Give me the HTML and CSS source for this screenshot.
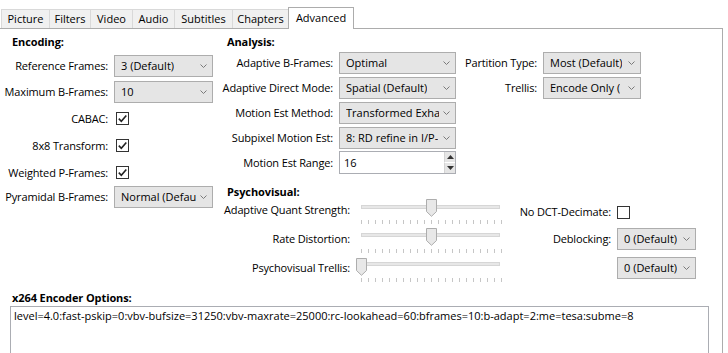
FILE: index.html
```html
<!DOCTYPE html>
<html>
<head>
<meta charset="utf-8">
<link rel="stylesheet" href="styles.css">
</head>
<body>
<div class="tabs">
  <div class="tab t-picture">Picture</div>
  <div class="tab t-filters">Filters</div>
  <div class="tab t-video">Video</div>
  <div class="tab t-audio">Audio</div>
  <div class="tab t-subs">Subtitles</div>
  <div class="tab t-chapters">Chapters</div>
  <div class="tab t-adv active">Advanced</div>
</div>
<div class="panel">
  <div class="top">
    <section class="enc">
      <h3 class="hdr">Encoding:</h3>
      <div class="enc-grid">
        <label class="lbl">Reference Frames:</label>
        <div class="combo"><span>3 (Default)</span><svg class="chev" width="7" height="4" viewBox="0 0 7 4"><path d="M0.5 0.5L3.5 3.5L6.5 0.5"/></svg></div>
        <label class="lbl">Maximum B-Frames:</label>
        <div class="combo"><span>10</span><svg class="chev" width="7" height="4" viewBox="0 0 7 4"><path d="M0.5 0.5L3.5 3.5L6.5 0.5"/></svg></div>
        <label class="lbl">CABAC:</label>
        <div class="cb"><svg width="11" height="11" viewBox="0 0 11 11"><path d="M1.8 5.6L4.3 8.2L9.3 2.4"/></svg></div>
        <label class="lbl">8x8 Transform:</label>
        <div class="cb"><svg width="11" height="11" viewBox="0 0 11 11"><path d="M1.8 5.6L4.3 8.2L9.3 2.4"/></svg></div>
        <label class="lbl">Weighted P-Frames:</label>
        <div class="cb"><svg width="11" height="11" viewBox="0 0 11 11"><path d="M1.8 5.6L4.3 8.2L9.3 2.4"/></svg></div>
        <label class="lbl">Pyramidal B-Frames:</label>
        <div class="combo"><span>Normal (Defau</span><svg class="chev" width="7" height="4" viewBox="0 0 7 4"><path d="M0.5 0.5L3.5 3.5L6.5 0.5"/></svg></div>
      </div>
    </section>
    <section class="right">
      <h3 class="hdr">Analysis:</h3>
      <div class="an-grid">
        <label class="lbl c1">Adaptive B-Frames:</label>
        <div class="combo"><span>Optimal</span><svg class="chev" width="7" height="4" viewBox="0 0 7 4"><path d="M0.5 0.5L3.5 3.5L6.5 0.5"/></svg></div>
        <label class="lbl">Partition Type:</label>
        <div class="combo"><span>Most (Default)</span><svg class="chev" width="7" height="4" viewBox="0 0 7 4"><path d="M0.5 0.5L3.5 3.5L6.5 0.5"/></svg></div>

        <label class="lbl c1">Adaptive Direct Mode:</label>
        <div class="combo"><span>Spatial (Default)</span><svg class="chev" width="7" height="4" viewBox="0 0 7 4"><path d="M0.5 0.5L3.5 3.5L6.5 0.5"/></svg></div>
        <label class="lbl">Trellis:</label>
        <div class="combo"><span>Encode Only (</span><svg class="chev" width="7" height="4" viewBox="0 0 7 4"><path d="M0.5 0.5L3.5 3.5L6.5 0.5"/></svg></div>

        <label class="lbl c1">Motion Est Method:</label>
        <div class="combo"><span>Transformed Exha</span><svg class="chev" width="7" height="4" viewBox="0 0 7 4"><path d="M0.5 0.5L3.5 3.5L6.5 0.5"/></svg></div>

        <label class="lbl c1">Subpixel Motion Est:</label>
        <div class="combo"><span>8: RD refine in I/P-</span><svg class="chev" width="7" height="4" viewBox="0 0 7 4"><path d="M0.5 0.5L3.5 3.5L6.5 0.5"/></svg></div>

        <label class="lbl c1">Motion Est Range:</label>
        <div class="spin">
          <span class="spin-val">16</span>
          <div class="spin-btns">
            <div class="sb"><svg width="7" height="4" viewBox="0 0 7 4"><path d="M0 4L3.5 0L7 4Z"/></svg></div>
            <div class="sb"><svg width="7" height="4" viewBox="0 0 7 4"><path d="M0 0L3.5 4L7 0Z"/></svg></div>
          </div>
        </div>
      </div>

      <h3 class="hdr hdr-psy">Psychovisual:</h3>
      <div class="psy-grid">
        <label class="lbl">Adaptive Quant Strength:</label>
        <div class="slider"><div class="track"></div><div class="ticks"></div><svg class="thumb" style="left:70px" width="11" height="18" viewBox="0 0 11 18"><path d="M0.5 0.5H10.5V12.5L5.5 17.3L0.5 12.5Z"/></svg></div>
        <label class="lbl shift">No DCT-Decimate:</label>
        <div class="cb cb-plain shift"></div>

        <label class="lbl">Rate Distortion:</label>
        <div class="slider s2"><div class="track"></div><div class="ticks"></div><svg class="thumb" style="left:70px" width="11" height="18" viewBox="0 0 11 18"><path d="M0.5 0.5H10.5V12.5L5.5 17.3L0.5 12.5Z"/></svg></div>
        <label class="lbl">Deblocking:</label>
        <div class="combo"><span>0 (Default)</span><svg class="chev" width="7" height="4" viewBox="0 0 7 4"><path d="M0.5 0.5L3.5 3.5L6.5 0.5"/></svg></div>

        <label class="lbl">Psychovisual Trellis:</label>
        <div class="slider s3"><div class="track"></div><div class="ticks"></div><svg class="thumb" style="left:0px" width="11" height="18" viewBox="0 0 11 18"><path d="M0.5 0.5H10.5V12.5L5.5 17.3L0.5 12.5Z"/></svg></div>
        <div class="combo c4"><span>0 (Default)</span><svg class="chev" width="7" height="4" viewBox="0 0 7 4"><path d="M0.5 0.5L3.5 3.5L6.5 0.5"/></svg></div>
      </div>
    </section>
  </div>
  <div class="opts">
    <h3 class="hdr">x264 Encoder Options:</h3>
    <div class="textarea">level=4.0:fast-pskip=0:vbv-bufsize=31250:vbv-maxrate=25000:rc-lookahead=60:bframes=10:b-adapt=2:me=tesa:subme=8</div>
  </div>
</div>
</body>
</html>
```
FILE: styles.css
```css
* { box-sizing: border-box; }
html, body { margin: 0; padding: 0; }
body {
  width: 728px;
  height: 353px;
  overflow: hidden;
  background: #fff;
  color: #000;
  font-family: "Open Sans", "Noto Sans", sans-serif;
  font-size: 11px;
  line-height: 16px;
}

/* Tabs */
.tabs {
  display: flex;
  align-items: flex-end;
  height: 28px;
  padding-left: 1px;
  position: relative;
  z-index: 1;
}
.tab {
  height: 19px;
  border: 1px solid #d9d9d9;
  border-bottom: none;
  background: #f0f0f0;
  margin-right: -1px;
  text-align: center;
  line-height: 17px;
  white-space: nowrap;
}
.t-picture { width: 49px; }
.t-filters { width: 42px; }
.t-video { width: 43px; }
.t-audio { width: 43px; }
.t-subs { width: 59px; }
.t-chapters { width: 57px; }
.t-adv { width: 66px; }
.tab.active {
  height: 22px;
  margin-bottom: -1px;
  background: #fff;
  border-color: #acacac;
  line-height: 19px;
  position: relative;
}

/* Panel */
.panel {
  border-top: 1px solid #acacac;
  border-right: 1px solid #acacac;
  margin-right: 5px;
  height: 340px;
}
.top {
  display: flex;
  padding-top: 5px;
}
.hdr {
  margin: 0;
  font-size: 11px;
  font-weight: 700;
  line-height: 16px;
  letter-spacing: -0.1px;
}
.enc { width: 213px; flex: none; }
.enc .hdr { padding-left: 12px; }
.right { flex: none; }
.right .hdr { padding-left: 14px; }

.lbl {
  justify-self: end;
  white-space: nowrap;
  letter-spacing: -0.15px;
}

.enc-grid {
  display: grid;
  grid-template-columns: 108px 99px;
  grid-template-rows: 26px 26px 27px 27px 27px 22px;
  column-gap: 6px;
  margin-top: 3px;
  align-items: center;
}

.an-grid {
  display: grid;
  grid-template-columns: 120px 117px 75px 98px;
  grid-auto-rows: 25px;
  column-gap: 6px;
  align-items: center;
}
.c1 { grid-column: 1; }
.c4 { grid-column: 4; }

.hdr-psy {
  margin-top: 9px;
  margin-bottom: -4px;
}
.psy-grid {
  display: grid;
  grid-template-columns: 137px 145px 104px 79px;
  grid-template-rows: 28px 29px 29px;
  column-gap: 6px;
  align-items: center;
}
.shift { margin-top: 4px; }

/* Combobox */
.combo {
  height: 22px;
  width: 100%;
  border: 1px solid #adadad;
  background: #e5e5e5;
  display: flex;
  align-items: center;
  justify-content: space-between;
  padding: 0 5px 0 6px;
  white-space: nowrap;
  overflow: hidden;
}
.combo span { overflow: hidden; }
.chev { flex: none; margin-left: 4px; }
.chev path { fill: none; stroke: #7a7a7a; stroke-width: 1; }

/* Checkbox */
.cb {
  width: 13px;
  height: 13px;
  border: 1px solid #333;
  background: #fff;
  justify-self: start;
  margin-left: 2px;
  display: flex;
  align-items: center;
  justify-content: center;
}
.cb svg path { fill: none; stroke: #222; stroke-width: 1.6; }
.cb-plain { margin-left: 0; }

/* Spinbox */
.spin {
  height: 23px;
  width: 100%;
  border: 1px solid #abadb3;
  background: #fff;
  display: flex;
  align-items: center;
  justify-content: space-between;
  padding-left: 4px;
}
.spin-btns {
  display: flex;
  flex-direction: column;
  width: 11px;
  height: 100%;
}
.sb {
  flex: 1;
  background: #e5e5e5;
  border-left: 1px solid #d4d4d4;
  display: flex;
  align-items: center;
  justify-content: center;
}
.sb + .sb { border-top: 1px solid #fff; }
.sb svg path { fill: #333; }

/* Slider */
.slider {
  position: relative;
  height: 28px;
  align-self: start;
}
.track {
  margin: 9px 1px 0 5px;
  height: 4px;
  background: #e7e7e7;
  border: 1px solid #d6d6d6;
}
.ticks {
  margin: 11px 0 0 5px;
  width: 141px;
  height: 4px;
  background: repeating-linear-gradient(to right, #c6c6c6 0 1px, transparent 1px 7px);
}
.thumb {
  position: absolute;
  top: 3px;
}
.s2 .thumb { top: 4px; }
.s3 .thumb { top: 5px; }
.s2 .ticks, .s3 .ticks { margin-top: 12px; }
.thumb path { fill: #e8e8e8; stroke: #adadad; stroke-width: 1; }

/* Options */
.opts {
  margin-top: 8px;
}
.opts .hdr { padding-left: 12px; }
.textarea {
  margin-left: 10px;
  width: 699px;
  height: 60px;
  border: 1px solid #abadb3;
  padding: 1px 3px;
  white-space: nowrap;
  overflow: hidden;
}
```
